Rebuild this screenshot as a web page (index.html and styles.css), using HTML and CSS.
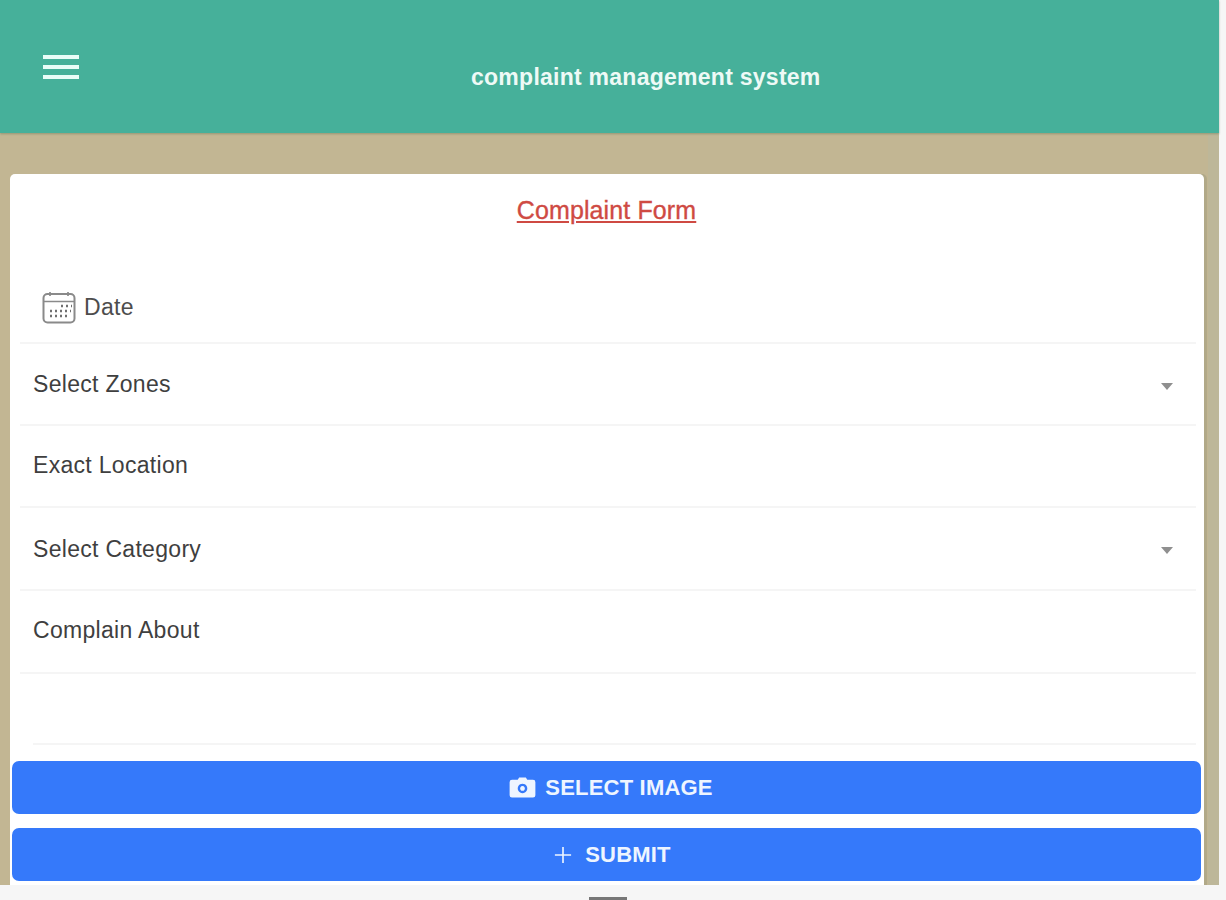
FILE: index.html
```html
<!DOCTYPE html>
<html lang="en">
<head>
<meta charset="utf-8">
<title>complaint management system</title>
<link rel="stylesheet" href="styles.css">
</head>
<body>
<div class="app">
  <header class="toolbar">
    <button class="menu" aria-label="Menu">
      <svg width="38" height="26" viewBox="0 0 38 26"><path d="M1 3H37M1 13H37M1 23H37" stroke="#e9fdf8" stroke-width="4" fill="none"/></svg>
    </button>
    <h1 class="title">complaint management system</h1>
  </header>
  <main class="content">
    <section class="card">
      <h2 class="form-title"><span>Complaint Form</span></h2>
      <div class="row row-date">
        <svg class="cal" width="34" height="33" viewBox="0 0 34 33" fill="none" stroke="#8a8a8a">
          <rect x="1.500" y="3" width="31" height="28.500" rx="4" stroke-width="2"/>
          <path d="M2 10.500H32M8 1v4M26 1v4" stroke-width="1.700"/>
          <path d="M19 15h2m3 0h2m3 0h1M8 20h2m3 0h2m3 0h2m3 0h2m3 0h1M8 25h2m3 0h2m3 0h2m3 0h2" stroke-width="2.400" stroke="#707070"/>
        </svg>
        <span class="label">Date</span>
      </div>
      <div class="row row-zones"><span class="label">Select Zones</span><i class="caret"></i></div>
      <div class="row row-location"><span class="label">Exact Location</span></div>
      <div class="row row-category"><span class="label">Select Category</span><i class="caret"></i></div>
      <div class="row row-about"><span class="label">Complain About</span></div>
      <div class="row row-blank"></div>
      <div class="buttons">
        <button class="btn btn-image">
          <svg width="27" height="21" viewBox="0 0 28 22"><path fill-rule="evenodd" fill="#eef5ff" d="M9 3 10.500 .5H17.500L19 3H25a2.500 2.500 0 0 1 2.500 2.500V19A2.500 2.500 0 0 1 25 21.500H3A2.500 2.500 0 0 1 .5 19V5.500A2.500 2.500 0 0 1 3 3ZM14 7a5 5 0 1 0 .01 0ZM14 9.500a2.500 2.500 0 1 1-.01 0Z"/></svg>
          <span>SELECT IMAGE</span>
        </button>
        <button class="btn btn-submit">
          <svg width="18" height="18" viewBox="0 0 20 20"><path d="M10 1V19M1 10H19" stroke="#eef5ff" stroke-width="1.800"/></svg>
          <span>SUBMIT</span>
        </button>
      </div>
    </section>
  </main>
  <footer class="bottom"><i class="handle"></i></footer>
</div>
</body>
</html>
```
FILE: styles.css
```css
* { box-sizing: border-box; }
html, body { margin: 0; padding: 0; }
body {
  width: 1226px;
  height: 900px;
  overflow: hidden;
  background: #f6f6f6;
  font-family: "Liberation Sans", Arial, sans-serif;
  color: #3d3d3d;
}
.app { display: flex; flex-direction: column; height: 900px; }
.toolbar {
  height: 133px;
  width: 1219px;
  flex: none;
  background: #46b09a;
  display: flex;
  position: relative;
  box-shadow: 0 1px 2px rgba(90, 110, 80, .45);
  z-index: 1;
}
.menu {
  border: 0;
  background: none;
  padding: 0;
  margin: 54px 0 0 42px;
  width: 38px;
  height: 26px;
  line-height: 0;
}
.title {
  margin: 64px 0 0 391px;
  font-size: 23px;
  line-height: 26px;
  font-weight: 700;
  letter-spacing: .26px;
  color: #eefaf6;
  white-space: nowrap;
}
.content {
  width: 1219px;
  height: 752px;
  flex: none;
  background: #c2b693;
  padding: 41px 0 0 10px;
  border-right: 11px solid #bdb799;
}
.card {
  background: #fff;
  height: 711px;
  width: 1194px;
  border-radius: 5px 5px 0 0;
  padding: 0 3px 0 2px;
  display: flex;
  flex-direction: column;
  box-shadow: 3px 0 0 #b1a988;
}
.form-title {
  margin: 0;
  height: 101px;
  padding-top: 22px;
  text-align: center;
  font-size: 25px;
  line-height: 28px;
  font-weight: 400;
  letter-spacing: .12px;
  color: #cf4a43;
  text-decoration: underline;
  -webkit-text-stroke: .35px #cf4a43;
}
.row {
  flex: none;
  display: flex;
  align-items: center;
  margin: 0 5px 0 8px;
  padding: 0 23px 0 13px;
  border-bottom: 2px solid #f5f5f5;
  justify-content: space-between;
}
.label { font-size: 23px; line-height: 28px; letter-spacing: .3px; color: #3f3f3f; }
.row-date { height: 69px; justify-content: flex-start; padding: 0 0 3px 22px; gap: 8px; }
.row-date .label { color: #4d4d4d; }
.row-zones { height: 82px; }
.row-location { height: 82px; padding-bottom: 2px; }
.row-category { height: 83px; }
.row-about { height: 83px; padding-bottom: 3px; }
.row-blank { height: 71px; margin-left: 21px; }
.caret {
  width: 0;
  height: 0;
  border-left: 6px solid transparent;
  border-right: 6px solid transparent;
  border-top: 7px solid #8f8f8f;
  margin-top: 4px;
}
.buttons { display: flex; flex-direction: column; gap: 14px; margin-top: 16px; }
.btn {
  height: 53px;
  border: 0;
  border-radius: 7px;
  background: #3579fa;
  color: #eef5ff;
  font: 700 22px/28px "Liberation Sans", Arial, sans-serif;
  letter-spacing: .2px;
  display: flex;
  align-items: center;
  justify-content: center;
  gap: 9px;
  padding: 0;
  width: 1189px;
}
.btn-image { padding-left: 9px; }
.btn-submit { gap: 13px; padding-left: 12px; }
.bottom {
  flex: 1;
  background: #f6f6f6;
  display: flex;
  justify-content: center;
  padding-right: 10px;
  align-items: flex-end;
}
.handle { width: 38px; height: 3px; background: #777; }
```
